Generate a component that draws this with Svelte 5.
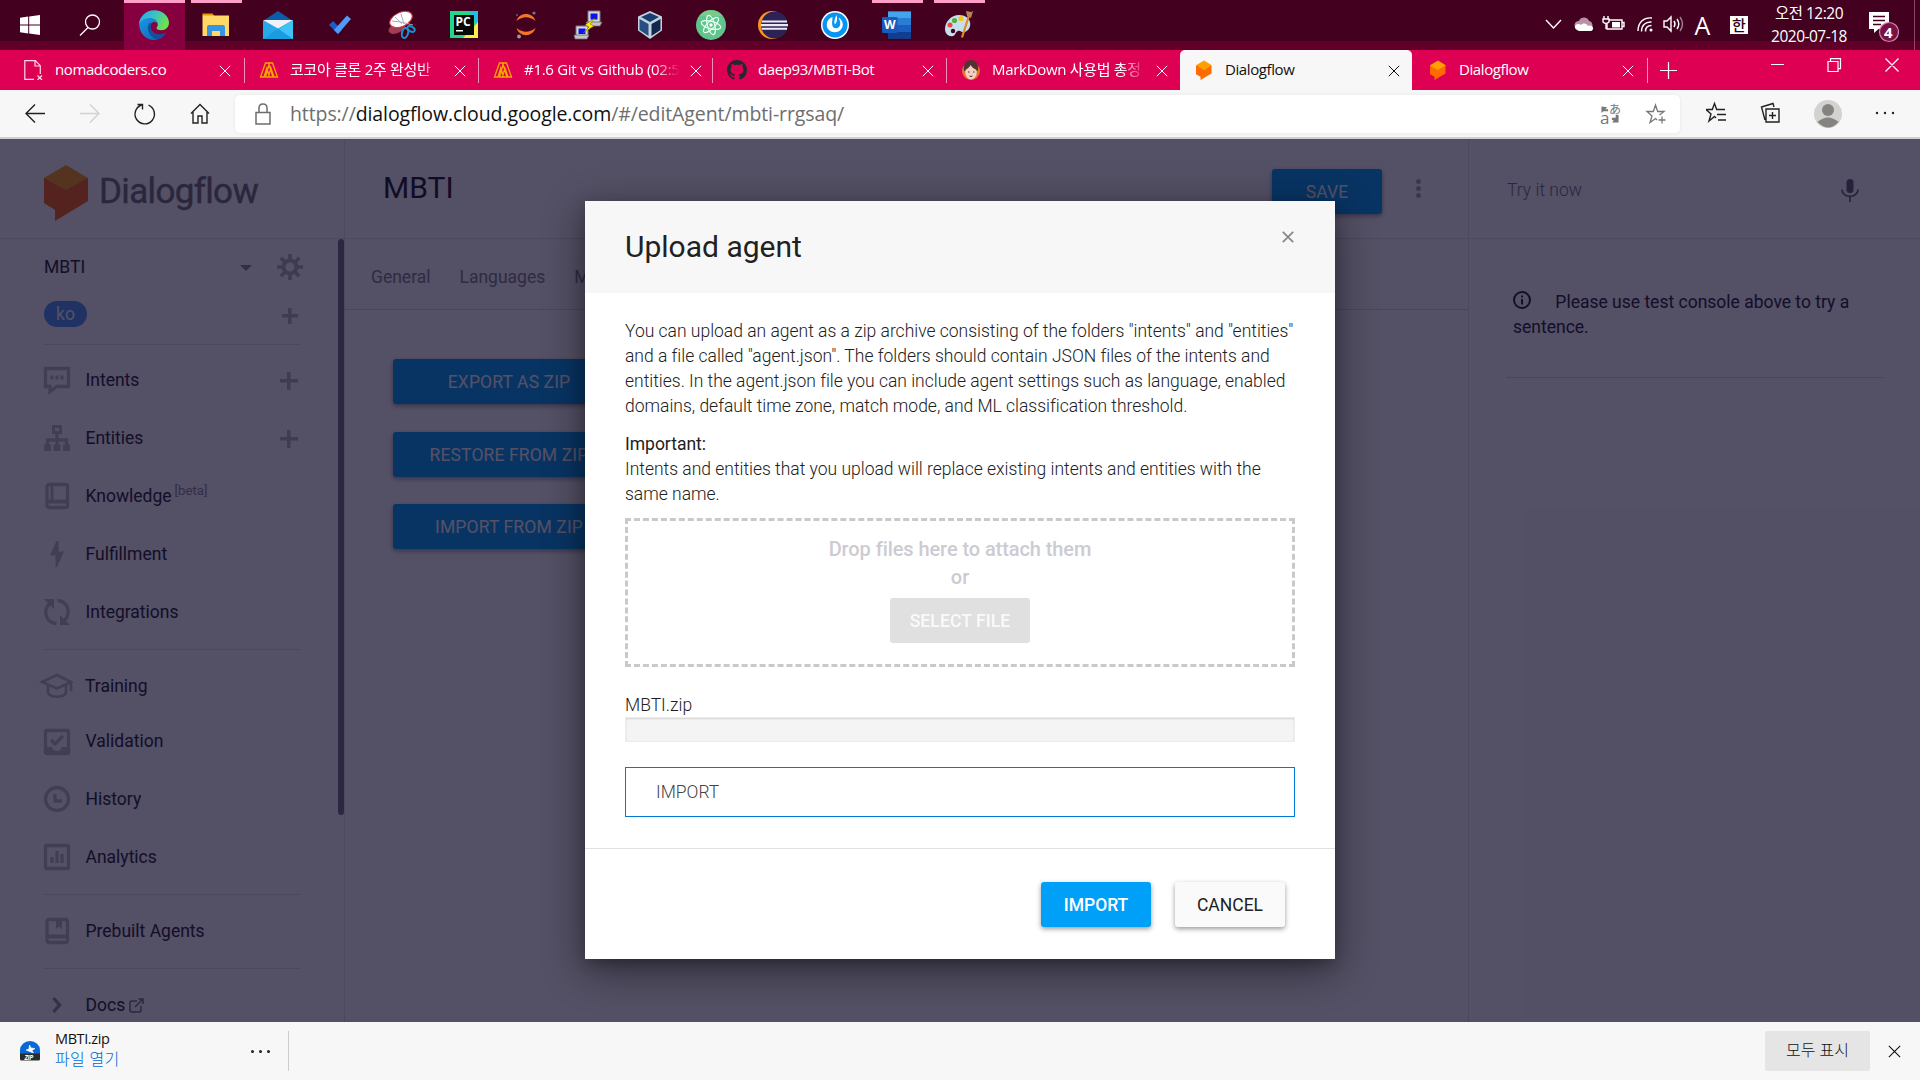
<script>
  const apps = [
    { id: 'edge', active: true, open: true },
    { id: 'files', open: true },
    { id: 'mail' },
    { id: 'todo' },
    { id: 'snip' },
    { id: 'pycharm' },
    { id: 'jupyter' },
    { id: 'putty' },
    { id: 'vbox' },
    { id: 'atom' },
    { id: 'eclipse' },
    { id: 'power' },
    { id: 'word', open: true },
    { id: 'paint', open: true }
  ];

  const tabs = [
    { icon: 'page', title: 'nomadcoders.co' },
    { icon: 'nomad', title: '코코아 클론 2주 완성반', fade: true },
    { icon: 'nomad', title: '#1.6 Git vs Github (02:5', fade: true },
    { icon: 'github', title: 'daep93/MBTI-Bot' },
    { icon: 'face', title: 'MarkDown 사용법 총정', fade: true },
    { icon: 'flow', title: 'Dialogflow', active: true },
    { icon: 'flow', title: 'Dialogflow' }
  ];

  const groups = [
    [
      { icon: 'intents', label: 'Intents', add: true },
      { icon: 'entities', label: 'Entities', add: true },
      { icon: 'knowledge', label: 'Knowledge', beta: true },
      { icon: 'bolt', label: 'Fulfillment' },
      { icon: 'sync', label: 'Integrations' }
    ],
    [
      { icon: 'training', label: 'Training' },
      { icon: 'validation', label: 'Validation' },
      { icon: 'history', label: 'History' },
      { icon: 'analytics', label: 'Analytics' }
    ],
    [{ icon: 'prebuilt', label: 'Prebuilt Agents' }],
    [{ icon: 'chevron', label: 'Docs', external: true }]
  ];
  const actions = ['EXPORT AS ZIP', 'RESTORE FROM ZIP', 'IMPORT FROM ZIP'];
</script>

{#snippet appIcon(id)}
  <svg class="app-icon" viewBox="0 0 30 30" width="30" height="30">
    {#if id === 'edge'}
      <defs>
        <linearGradient id="eg" x1="0" y1="0" x2="1" y2=".4"><stop offset="0" stop-color="#2aa5e4" /><stop offset=".5" stop-color="#35c1c8" /><stop offset="1" stop-color="#6be04f" /></linearGradient>
        <linearGradient id="eb" x1="0" y1="0" x2="1" y2="1"><stop offset="0" stop-color="#1f9be6" /><stop offset="1" stop-color="#0b5cb0" /></linearGradient>
      </defs>
      <path d="M.2 14C.2 7 6 3 12 6c5 2 7.500 6 7 8-1-2-5-3-7 0-2 4 1 10 7 10.500 3.500.3 6-.8 8-2C24.500 27 20 30 15 30 7 30 .2 23.500.2 14z" fill="url(#eb)" />
      <path d="M12 12c-6 4-2.500 14.500 5.500 17.500 4.500-.6 7.500-3.200 9.500-7-3 2-6.500 2.500-9.500 1.500-5-1.800-7-7-5.500-12z" fill="#124f9c" />
      <path d="M.2 14C.8 6 7 .2 15.200.2 24 .2 30 6.500 30 12.800c0 4.500-3.400 7.500-7.500 7.500-3 0-5-1-5-2.300 0-.8 1.300-1.200 1.300-3.700C18.800 10.500 15 8 10.800 8 5.500 8 1.800 10.800.2 14z" fill="url(#eg)" />
    {:else if id === 'files'}
      <path d="M1.500 3.500h10l2 2.500h-12z" fill="#e09b00" /><path d="M1.500 5.500h26.500v20.500h-26.500z" fill="#ffd868" />
      <path d="M6 26v-9q0-2 2-2h14q2 0 2 2v9h-5v-5h-8v5z" fill="#3595e2" />
    {:else if id === 'mail'}
      <path d="M0 11 15 1l15 10v5H0z" fill="#0a5da8" /><path d="M1 10h28v12H1z" fill="#f0f2f5" /><path d="M0 10v19h30V10L15 18.500z" fill="#28a8ea" /><path d="M0 29h30V10z" fill="#3fc3f5" /><path d="M0 29h30L15 18.500z" fill="#1b9ce0" />
    {:else if id === 'todo'}
      <path d="m4 15 4-4 9 9-4 4z" fill="#1a5fc8" /><path d="m9 20 13-14.500 4 3.500L13 24z" fill="#4e9bfb" />
    {:else if id === 'snip'}
      <ellipse cx="10" cy="18" rx="9" ry="5" fill="#b54c60" opacity=".8" transform="rotate(-25 10 18)" />
      <ellipse cx="14" cy="9.500" rx="12" ry="7" fill="#fff" stroke="#c93447" transform="rotate(-25 14 9.500)" />
      <path d="m5 11 9 1 12 3M14 4l3 10M8 7l7 7" stroke="#aab" fill="none" />
      <g fill="none" stroke="#1593d2" stroke-width="2"><ellipse cx="18" cy="23" rx="3" ry="5" transform="rotate(15 18 23)" /><ellipse cx="24" cy="19" rx="4" ry="2.300" transform="rotate(28 24 19)" /></g>
    {:else if id === 'pycharm'}
      <path d="M1 1h28v27H1z" fill="#21d789" /><path d="M20 1h9v15z" fill="#23bce9" /><path d="m29 12v16H14z" fill="#f6ee4b" /><path d="M5 5h20v20H5z" fill="#080808" />
      <text x="6.500" y="15.500" font-size="12" font-weight="700" fill="#fff" font-family="Open Sans">PC</text><path d="M7 20h7v1.500H7z" fill="#fff" />
    {:else if id === 'jupyter'}
      <path d="M5.500 11C8 1.500 22 1.500 24.500 11 18 6 12 6 5.500 11zM5.500 18c2.500 9.500 16.500 9.500 19 0-6.500 5-12.500 5-19 0z" fill="#f37626" /><circle cx="23" cy="3" r="1.600" fill="#777" /><circle cx="8" cy="26.500" r="1.900" fill="#9b9b9b" /><circle cx="6" cy="5" r="1" fill="#666" />
    {:else if id === 'putty'}
      <path d="M15 1h12v12H15zM3 16h12v11H3z" fill="#d8d8d8" stroke="#777" /><path d="M17.500 3.500h7v6h-7zM5.500 18.500h7v5.500h-7z" fill="#0a12f5" /><path d="M13 12h16l-2 4H15zM1 25h15l-2 4H2z" fill="#c5c5c5" stroke="#666" stroke-width=".8" /><path d="m22 8-10 7 4 2-6 6 11-7-4-2z" fill="#ffef00" stroke="#665c00" stroke-width=".5" />
    {:else if id === 'vbox'}
      <path d="M15 1 3 6.500v14L15 29l12-8.500v-14z" fill="#c6d1df" /><path d="m15 3 9 4-9 5-9-5z" fill="#183f72" /><path d="m4.500 9 9 5v12l-9-6z" fill="#274f80" /><path d="m25.500 9-9 5v12l9-6z" fill="#10284d" />
    {:else if id === 'atom'}
      <circle cx="15" cy="15" r="15" fill="#5fc48d" /><path d="M15 0a15 15 0 0 1 12 6H3a15 15 0 0 1 12-6z" fill="#8bd08c" opacity=".6" />
      <g fill="none" stroke="#e5fff0" stroke-width="1.200"><ellipse cx="15" cy="15" rx="10" ry="3.700" transform="rotate(15 15 15)" /><ellipse cx="15" cy="15" rx="10" ry="3.700" transform="rotate(75 15 15)" /><ellipse cx="15" cy="15" rx="10" ry="3.700" transform="rotate(135 15 15)" /></g><circle cx="15" cy="15" r="1.700" fill="#fff" />
    {:else if id === 'eclipse'}
      <circle cx="14" cy="15" r="14" fill="#f7941e" /><circle cx="16.500" cy="15" r="13.500" fill="#2c2255" /><path d="M4 10.500h25v2H4zM3 14h27v2.200H3zM4 17.800h25v2H4z" fill="#ece9f5" />
    {:else if id === 'power'}
      <circle cx="15" cy="15" r="14" fill="#fff" /><circle cx="15" cy="15" r="12.500" fill="#0795f3" /><path d="M12.500 7c-6 2-7.500 9-3.500 13 3 3 8.500 3 11.500 0 4-4 2.500-10-2-12.500 2 4 2.500 7.500.5 9.500s-5.500 1.500-6.500-1c-1-2.500 0-6 0-9z" fill="#fff" /><path d="M16.500 5c1 3 .8 7-1.500 9.500-1.500-3 0-6 1.500-9.500z" fill="#fff" />
    {:else if id === 'word'}
      <path d="M6 1.500h23v27H6z" fill="#1b5ebe" /><path d="M6 1.500h23v6.500H6z" fill="#41a5ee" /><path d="M6 8h23v7H6z" fill="#2b7cd3" /><path d="M6 22h23v6.500H6z" fill="#103f91" /><rect y="7" width="15.500" height="16" rx="1" fill="#185abd" /><text x="2" y="19.300" font-size="12" font-weight="700" fill="#fff" font-family="Open Sans">W</text>
    {:else}
      <path d="M15 5C7 5 1 12 1 19c0 5 4 8 8 7 3-.8 2-4 5-5 3-.8 3 2 7 1 4-1.500 6-6 5-10S21 5 15 5z" fill="#c4e0ee" /><circle cx="6" cy="15" r="2.500" fill="#e74d3c" /><circle cx="10.500" cy="10.500" r="2.600" fill="#52b043" /><circle cx="17" cy="8.500" r="2.600" fill="#ffc20e" /><circle cx="9" cy="21" r="2.200" fill="#43001f" /><path d="m24 5 2 1-7 22-2-1z" fill="#e88623" /><path d="m22 1 5 1 2-1-2 7-4-2z" fill="#b98554" />
    {/if}
  </svg>
{/snippet}

{#snippet favicon(id)}
  <svg class="favicon" viewBox="0 0 20 20" width="20" height="20">
    {#if id === 'page'}
      <path d="M10 19.300H.8V.7h10.500l5 5V14M11 1v5h5" fill="none" stroke="#ffd9e8" stroke-width="1.200" /><path d="m13.500 15.500 4.500 4.500m0-4.500L13.500 20" stroke="#ffd9e8" stroke-width="1.200" />
    {:else if id === 'nomad'}
      <path d="M1.500 17 6.500 3h3l4.500 14h-3.500L7.800 8 5 17zM6.500 17l4-14h3l5 14H15L11.900 8l-2.500 9z" fill="none" stroke="#f7a400" stroke-width="1.300" />
    {:else if id === 'github'}
      <path transform="scale(1.25)" fill="#24292e" d="M8 0C3.580 0 0 3.580 0 8c0 3.540 2.290 6.530 5.470 7.590.4.070.55-.17.55-.38 0-.19-.01-.82-.01-1.490-2.010.37-2.530-.49-2.690-.94-.09-.23-.48-.94-.82-1.130-.28-.15-.68-.52-.01-.53.63-.01 1.080.58 1.230.82.72 1.210 1.870.87 2.330.66.070-.52.280-.87.510-1.070-1.780-.2-3.640-.89-3.640-3.950 0-.87.310-1.590.82-2.150-.08-.2-.36-1.020.08-2.120 0 0 .67-.21 2.200.82.640-.18 1.320-.27 2-.27s1.360.09 2 .27c1.530-1.040 2.200-.82 2.200-.82.440 1.100.16 1.920.08 2.120.51.560.82 1.270.82 2.150 0 3.070-1.870 3.750-3.650 3.950.29.250.54.730.54 1.480 0 1.070-.01 1.930-.01 2.200 0 .21.150.46.550.38A8.010 8.010 0 0 0 16 8c0-4.420-3.580-8-8-8z" />
    {:else if id === 'face'}
      <circle cx="10" cy="11" r="9" fill="#e2752c" /><path d="M3 11C2 3 6 0 10.500 0S18 4 17 11z" fill="#513432" /><ellipse cx="10" cy="12" rx="5.800" ry="7.500" fill="#f5cfc2" /><path d="M4 10c2-1 4-2 5.500-5 2 3 4 4 6.500 5V5L10 1 4 5z" fill="#513432" /><path d="M7 12h1.500m3.500 0h1.500M8.500 16q1.500 1 3 0" stroke="#51312d" fill="none" />
    {:else}
      <path d="M2 5.300v9l4.500 2.500V20l11-6.500V5.300z" fill="#ff6b00" /><path d="m10 .5 7.800 4.800L10 10 2 5.300z" fill="#ffa000" />
    {/if}
  </svg>
{/snippet}

{#snippet navIcon(id)}
  <svg class="nav-icon" viewBox="0 0 26 26" width="26" height="26" fill="none" stroke="currentColor" stroke-width="3.300">
    {#if id === 'intents'}
      <path d="M1.500 1.500h23v18H13l-7 5v-5H1.500z" /><path d="M6.500 8.500h3v4h-3zM11.500 8.500h3v4h-3zM16.500 8.500h3v4h-3z" fill="currentColor" stroke="none" />
    {:else if id === 'entities'}
      <path d="M9.500 1.500h7v6h-7z" stroke-width="3" /><path d="M13 9v12M3.500 20v-5h19v5" /><path d="M0 19.500h7v6.500H0zM9.500 19.500h7v6.500h-7zM19 19.500h7v6.500h-7z" fill="currentColor" stroke="none" />
    {:else if id === 'knowledge' || id === 'prebuilt'}
      <rect x="3" y="1.500" width="20.500" height="23" rx="2" /><path d="M3 18.500h20" stroke-width="4" />
      {#if id === 'knowledge'}<path d="M8 1v17" stroke-width="3" />{:else}<path d="M12 2v9l3-2.500 3 2.500V2z" fill="currentColor" stroke="none" />{/if}
    {:else if id === 'bolt'}
      <path d="M12.500 0 6 14.500h5.500V26h1.500l7-15.500h-5.500V0z" fill="currentColor" stroke="none" />
    {:else if id === 'sync'}
      <path d="M12.500 24.500C5 24 .8 18 2 11c.5-3 2-5 4.500-7M13.500 1.500c7 .5 11.500 6 10.500 13-.5 3-2 5.500-4 7" /><path d="M0 0h10v10zM26 26H16V16z" fill="currentColor" stroke="none" />
    {:else if id === 'training'}
      <g transform="translate(-4 1)" stroke-width="2.600"><path d="m2 8 15-7 14 7-14 6.500zM31 8v9M8 11v8c3 5 15 5 18 0v-8" /></g>
    {:else if id === 'validation'}
      <rect x="1.500" y="1.500" width="23" height="23" rx="1" /><path d="m7 11 4 4 8-8" /><path d="M1 18h7q1 4 5 4t5-4h7v7H1z" fill="currentColor" stroke="none" />
    {:else if id === 'history'}
      <circle cx="13" cy="13" r="11.500" /><path d="M11 8v7h7" />
    {:else if id === 'analytics'}
      <rect x="1.500" y="1.500" width="23" height="23" rx="1" /><path d="M8 13v6M13 7v12M18 10v9" />
    {:else}
      <path d="m9.500 6 6 7-6 7" />
    {/if}
  </svg>
{/snippet}

{#snippet cross(size)}
  <svg class="cross" viewBox="0 0 12 12" width={size} height={size}><path d="m.8.8 10.400 10.400m0-10.400L.8 11.200" stroke="currentColor" /></svg>
{/snippet}

{#snippet cube(w, h)}
  <svg viewBox="0 0 44 56" width={w} height={h}><path d="M0 13v25l11 7v11l33-20V13z" fill="#ff6a14" /><path d="m22 0 22 13-22 12L0 13z" fill="#ffa21a" /></svg>
{/snippet}

<div class="screen">
  <header class="taskbar">
    <div class="task start"><svg viewBox="0 0 20 20" width="20" height="20" fill="#fff"><path d="M0 2.800 8.200 1.600v7.900H0zM9.200 1.500 20 0v9.500H9.200zM0 10.500h8.200v7.900L0 17.200zM9.200 10.500H20V20L9.200 18.500z" /></svg></div>
    <div class="task find"><svg viewBox="0 0 22 22" width="22" height="22" fill="none" stroke="#fff" stroke-width="1.300"><circle cx="13.500" cy="8" r="7" /><path d="m9 13.500-8 8" /></svg></div>
    {#each apps as a}
      <div class="task" class:active={a.active} class:open={a.open}>{@render appIcon(a.id)}</div>
    {/each}
    <div class="tray">
      <svg viewBox="0 0 146 26" width="146" height="26" fill="none" stroke="#fff" stroke-width="1.400">
        <path d="m1 9 7.500 8L16 9" />
        <path d="M32 18c-4-2-3-8 2-8 2-5 9-4 10 0 4 0 5 8 1 8z" fill="#b893a5" stroke="none" /><path d="M32 19c-5-3 0-8 4-5 3-3 6-1 7 1 5-2 7 4 3 5H34z" fill="#fff" stroke="none" />
        <path d="M64 9h13v9H62v-5M77 11.500h2v4h-2" /><path d="M67 11h8v5.500h-8z" fill="#fff" stroke="none" /><path d="M59 5v3m4-3v3m-5 0h6v3q-3 3-6 0zm3 5v5" />
        <path d="M93 20C93 11 99 6 107 7M96.500 20.500c0-6 4-10 10-9.500M100.500 20.500c0-4 2-6 6-6" /><circle cx="106" cy="19" r="1.500" fill="#fff" stroke="none" />
        <path d="M119 10h3l4-4v14l-4-4h-3zM129 10q2 3 0 6M132 8q3.500 5 0 10" /><path d="M135 6q5 7 0 14" opacity=".5" />
      </svg>
      <span class="ime">A</span><span class="han">한</span>
      <div class="clock"><span>오전 12:20</span><span>2020-07-18</span></div>
      <div class="notice"><svg viewBox="0 0 30 32" width="30" height="32"><path d="M0 1h20v17H9.500L5 22v-4H0z" fill="#fff" /><path d="M4 5.500h12M4 9.500h12M4 13.500h8" stroke="#43001f" stroke-width="1.400" /><circle cx="20" cy="21" r="9.500" fill="#7d0e45" stroke="#c58ba7" stroke-width="1.200" /></svg><b>4</b></div>
      <i class="peek"></i>
    </div>
  </header>

  <nav class="tabs">
    {#each tabs as t, i}
      <div class="tab" class:active={t.active} class:plain={i === 4 || t.active}>
        {@render favicon(t.icon)}
        <span class="tab-title" class:fade={t.fade}>{t.title}</span>
        {@render cross(12)}
      </div>
    {/each}
    <svg class="plus-tab" viewBox="0 0 17 17" width="17" height="17"><path d="M8.500 0v17M0 8.500h17" stroke="#fff" stroke-width="1.200" /></svg>
    <svg class="window" viewBox="0 0 128 14" width="128" height="14" fill="none" stroke="#fff" stroke-width="1.200"><path d="M0 6.500h13M57 3.500h10v10H57zM59.500 3V.700h10v10H67M114.500.500l13 13m0-13-13 13" /></svg>
  </nav>

  <div class="toolbar">
    <svg class="controls" viewBox="0 0 190 26" width="190" height="26" fill="none" stroke="#222" stroke-width="1.400">
      <path d="M20 12.500H1M10 3.500l-9 9 9 9" /><path d="M55 12.500h19M65 3.500l9 9-9 9" stroke="#d2d2d2" />
      <path d="M123.500 4.200a9.700 9.700 0 1 1-7-.2M112.500 3.500h5v5" /><path d="m166 12.500 9-9 9 9M168 11v11h5v-7h4v7h5V11" />
    </svg>
    <div class="address">
      <svg viewBox="0 0 16 22" width="16" height="22" fill="none" stroke="#6e6e6e" stroke-width="1.500"><path d="M1 9.500h14V21H1zM4 9V5q0-4 4-4t4 4v4" /></svg>
      <span class="url">https://<b>dialogflow.cloud.google.com</b>/#/editAgent/mbti-rrgsaq/</span>
      <span class="translate"><svg viewBox="0 0 20 20" width="20" height="20" fill="#777"><path d="M1 2v7l2-2h5V5H5l2-2zM19 11v8h-7l2-2-2-1v-2h4v-3z" /></svg><span class="ta">a</span><span class="tj">あ</span></span>
      <svg class="fav-star" viewBox="0 0 21 21" width="21" height="21" fill="none" stroke="#777" stroke-width="1.300"><path d="M12 17 10.500 15.500 5 19.500l2-6.500-5-4.500h6.300L10.500 2l2.200 6.500H19L14.500 12M17 13.500v7m-3.500-3.500h7" /></svg>
    </div>
    <svg class="side-tools" viewBox="0 0 190 34" width="190" height="34" fill="none" stroke="#222" stroke-width="1.400">
      <path d="m10 21-1.500-1.500L3 24l2-7-5-4.500h6.300L8.500 6.500l2.200 6H19M11 17.500h9M12 23h8" />
      <path d="M59 23l-3.500-13L67 6.500 68 10M60 12h13v13H60zM66.500 15v7M63 18.500h7" />
      <circle cx="122" cy="17" r="14" fill="#d3d2cf" stroke="none" /><circle cx="122" cy="13" r="6" fill="#858382" stroke="none" /><path d="M111.500 25q10.500-9 21 0-10 11-21 0z" fill="#858382" stroke="none" />
      <g fill="#222" stroke="none"><circle cx="171" cy="16" r="1.200" /><circle cx="179" cy="16" r="1.200" /><circle cx="187" cy="16" r="1.200" /></g>
    </svg>
  </div>

  <div class="page">
    <aside class="sidebar">
      <div class="brand">{@render cube(44, 56)}<span>Dialogflow</span></div>
      <div class="side-scroll">
        <div class="agent">
          <span>MBTI</span><i class="caret"></i>
          <svg class="gear" viewBox="0 0 26 26" width="26" height="26" fill="none" stroke="currentColor"><circle cx="13" cy="13" r="6.500" stroke-width="4" /><path d="M13 0v5M13 21v5M0 13h5M21 13h5M3.800 3.800l3.600 3.600M18.600 18.600l3.600 3.600M22.200 3.800l-3.600 3.600M7.400 18.600l-3.600 3.600" stroke-width="3.600" /></svg>
        </div>
        <div class="lang"><span>ko</span><i class="add small"></i></div>
        {#each groups as g, gi}
          <hr />
          <div class="group g{gi}">
            {#each g as n}
              <div class="nav {n.icon}">
                {@render navIcon(n.icon)}<span>{n.label}</span>
                {#if n.beta}<sup>[beta]</sup>{/if}
                {#if n.external}<svg class="ext" viewBox="0 0 15 15" width="15" height="15" fill="none" stroke="currentColor" stroke-width="1.500"><path d="M8 3H3Q1 3 1 5v7q0 2 2 2h7q2 0 2-2V8M6 9l7-7M9.500 1H14v5" /></svg>{/if}
                {#if n.add}<i class="add"></i>{/if}
              </div>
            {/each}
          </div>
        {/each}
        <i class="thumb"></i>
      </div>
    </aside>

    <main class="main">
      <div class="main-head"><h1>MBTI</h1><button class="btn blue w110">SAVE</button><div class="dots"><i></i><i></i><i></i></div></div>
      <div class="subtabs"><span>General</span><span>Languages</span><span>ML Settings</span></div>
      <div class="actions">{#each actions as a}<button class="btn blue wide">{a}</button>{/each}</div>
    </main>

    <section class="console">
      <div class="try"><span>Try it now</span>
        <svg viewBox="0 0 18 24" width="18" height="24" fill="none" stroke="currentColor" stroke-width="1.700"><rect x="5.500" y="1" width="7" height="14" rx="3.500" fill="currentColor" stroke="none" /><path d="M1 11.500c0 9 16 9 16 0M9 18v6" /></svg>
      </div>
      <div class="hint">
        <svg viewBox="0 0 18 18" width="18" height="18" fill="none" stroke="currentColor" stroke-width="2"><circle cx="9" cy="9" r="8" /><path d="M9 8v5.500M9 4.500v2" /></svg>
        Please use test console above to try a sentence.
      </div>
    </section>

    <div class="overlay"></div>
    <div class="modal">
      <div class="modal-head"><h2>Upload agent</h2><span class="close">{@render cross(12)}</span></div>
      <div class="modal-body">
        <p>You can upload an agent as a zip archive consisting of the folders "intents" and "entities"<br />and a file called "agent.json". The folders should contain JSON files of the intents and<br />entities. In the agent.json file you can include agent settings such as language, enabled<br />domains, default time zone, match mode, and ML classification threshold.</p>
        <p><strong>Important:</strong><br />Intents and entities that you upload will replace existing intents and entities with the<br />same name.</p>
        <div class="drop"><span>Drop files here to attach them</span><span>or</span><button class="btn select">SELECT FILE</button></div>
        <div class="filename">MBTI.zip</div>
        <div class="progress"></div>
        <div class="confirm">IMPORT</div>
      </div>
      <div class="modal-foot"><button class="btn primary w110">IMPORT</button><button class="btn cancel w110">CANCEL</button></div>
    </div>
  </div>

  <footer class="downloads">
    <svg class="zip" viewBox="0 0 20 20" width="20" height="20"><path d="M0 13V9a10 9 0 0 1 20 0v4z" fill="#0a67d8" /><path d="m9.500 4 1.500 3 4 .5-3 2 1.500 2.500L6 9l3-1z" fill="#fff" stroke="#fff" stroke-width=".6" /><path d="M0 12.500h20V18q0 1.500-1.500 1.500h-17Q0 19.500 0 18z" fill="#2b2b2b" /><text x="4.500" y="18.500" font-size="6.500" font-weight="700" font-style="italic" fill="#fff" font-family="Open Sans">ZIP</text></svg>
    <div class="dl-text"><span>MBTI.zip</span><span class="link">파일 열기</span></div>
    <div class="more"><i></i><i></i><i></i></div>
    <button class="show-all">모두 표시</button>
    {@render cross(13)}
  </footer>
</div>

<style>
  :global(body) { margin: 0; overflow: hidden; }
  * { box-sizing: border-box; }
  svg { display: block; flex: none; }
  button { border: 0; padding: 0; margin: 0; font: inherit; }
  h1, h2 { margin: 0; font-weight: 400; }
  p { margin: 0; }
  .screen { width: 1920px; height: 1080px; display: flex; flex-direction: column; overflow: hidden; font-family: "Open Sans", "Noto Sans CJK KR", sans-serif; }

  .taskbar { height: 50px; flex: none; display: flex; background: linear-gradient(#43001f 0 41px, #600029 41px); }
  .task { width: 61.900px; height: 50px; flex: none; display: flex; justify-content: center; align-items: center; border-top: 3px solid transparent; }
  .task.start { width: 60px; }
  .task.find { width: 62px; margin-right: 2px; }
  .task.start svg, .task.find svg { margin-top: -3px; }
  .task.find svg { margin-left: -2px; }
  .app-icon { margin: -3px 0 0 -1px; }
  .task.open { background: linear-gradient(#ff9fc7, #ff9fc7) center -3px / 51px 3px no-repeat; background-origin: padding-box; background-clip: border-box; }
  .task.active { width: 61px; margin-right: .9px; background: #86003f; border-color: #ff9fc7; }
  .tray { margin-left: auto; display: flex; align-items: center; height: 50px; color: #fff; }
  .tray > svg { margin-top: -2px; }
  .ime { margin: 0 0 0 3px; width: 17px; font: 25px/50px "Open Sans"; text-align: center; }
  .han { width: 18px; height: 18px; margin-left: 19px; background: #fff; color: #30001a; font: 500 15px/17px "Noto Sans CJK KR"; text-align: center; }
  .clock { width: 92px; margin-left: 15px; display: flex; flex-direction: column; text-align: center; font-size: 15.500px; line-height: 23px; letter-spacing: -.5px; margin-top: -1px; }
  .notice { margin: 4px 0 0 14px; position: relative; width: 30px; height: 32px; }
  .notice b { position: absolute; left: 15px; top: 11px; font: 700 15px/20px "Open Sans"; }
  .peek { width: 1px; height: 50px; background: #8b4765; margin: 0 5px 0 15px; }

  .tabs { height: 40px; flex: none; display: flex; align-items: center; background: #de0052; color: #fff; }
  .tab { width: 234px; height: 40px; flex: none; display: flex; align-items: center; padding: 0 13px 0 14px; position: relative; }
  .tab:first-child { width: 245px; padding-left: 24px; padding-right: 14px; }
  .tab:nth-child(6) { width: 232px; border-radius: 5px 5px 0 0; padding-left: 14px; padding-right: 12px; margin-left: -1px; }
  .tab:nth-child(7) { width: 236px; padding: 0 14px 0 16px; }
  .tab::after { content: ""; position: absolute; right: 0; top: 8px; width: 1px; height: 25px; background: #f391b6; }
  .tab.plain::after { display: none; }
  .tab.active { background: #f7f7f7; color: #111; }
  .tab-title { flex: 1; margin: -2px 14px 0 11px; height: 24px; font-size: 15px; line-height: 24px; letter-spacing: -.4px; white-space: nowrap; }
  .tab-title.fade { mask-image: linear-gradient(90deg, #000 84%, transparent); margin-right: 10px; letter-spacing: -.3px; }
  .cross { margin-top: 1px; }
  .plus-tab { margin-left: 12px; }
  .window { margin: -11px 0 0 94px; }

  .toolbar { height: 49px; flex: none; display: flex; align-items: center; padding-left: 25px; background: #f7f7f7; border-bottom: 2px solid #cfcfcf; }
  .address { width: 1445px; height: 38px; margin-left: 20px; display: flex; align-items: center; padding: 0 14px 0 20px; background: #fff; border-radius: 5px; box-shadow: 0 0 4px #0001; }
  .url { margin-left: 19px; flex: 1; font-size: 19.500px; line-height: 36px; letter-spacing: -.1px; color: #6e6e6e; }
  .url b { font-weight: 400; color: #111; }
  .translate { position: relative; width: 20px; height: 20px; margin-right: 25px; color: #777; }
  .ta { position: absolute; left: 0; top: 4px; font: 17px/20px "Open Sans"; }
  .tj { position: absolute; left: 9px; top: -4px; font: 12px/18px "Noto Sans CJK JP"; }
  .translate svg { transform: scale(.95); clip-path: polygon(0 0, 45% 0, 45% 45%, 100% 50%, 100% 100%, 55% 100%, 55% 50%, 0 50%); }
  .side-tools { margin-left: 26px; }

  .page { position: relative; height: 883px; flex: none; display: flex; font-family: Roboto, sans-serif; font-size: 17.500px; line-height: 25px; color: #262638; background: #fff; overflow: hidden; }
  .sidebar { width: 345px; flex: none; border-right: 1px solid #e4e4e4; background: #fdfdfd; }
  .brand { height: 100px; display: flex; padding: 26px 0 0 44px; border-bottom: 1px solid #e4e4e4; }
  .brand span { margin: 2px 0 0 11px; font-size: 35px; line-height: 50px; letter-spacing: -.65px; color: #737378; -webkit-text-stroke: .4px #737378; }
  .side-scroll { position: relative; padding: 16px 44px 0; }
  .agent { display: flex; align-items: center; height: 25px; }
  .caret { margin: 1px 25px 0 auto; border: 6px solid transparent; border-top: 6px solid #8c8ca0; border-bottom: 0; }
  .gear { color: #b4b4b9; margin: -1px -3px 0 0; }
  .lang { display: flex; justify-content: space-between; align-items: center; height: 26px; margin: 21px 0 17px; }
  .lang span { width: 43px; height: 26px; border-radius: 13px; background: #4e9bf7; color: #fff; text-align: center; line-height: 26px; }
  .add { width: 18px; height: 18px; margin-left: auto; margin-right: 2px; background: linear-gradient(#b9b9be, #b9b9be) center / 18px 3.500px no-repeat, linear-gradient(#b9b9be, #b9b9be) center / 3.500px 18px no-repeat; }
  .add.small { width: 16px; height: 16px; margin: 4px 2px 0 auto; }
  hr { margin: 0; border: 0; border-top: 1px solid #e4e4e4; }
  .group { display: flex; flex-direction: column; }
  .nav { height: 58px; display: flex; align-items: center; }
  .nav > span { margin-left: 15.500px; }
  .nav.training > span { margin-left: 15px; }
  .nav .nav-icon { color: #c0c0c4; overflow: visible; }
  .nav.chevron .nav-icon { color: #9393a6; }
  .nav .add { margin-top: 2px; }
  .g0 { padding: 6px 0 8px; }
  .g1 { padding: 9px 0 8px; }
  .g1 .training { height: 54px; }
  .g1 .validation { height: 57px; }
  .g2 { padding: 7px 0 8px; }
  .g3 { padding: 7px 0; }
  sup { align-self: flex-start; margin: 11px 0 0 3px; font-size: 13.200px; line-height: 25px; color: #8f8f9a; vertical-align: baseline; }
  .ext { margin-left: 4px; color: #777785; }
  .thumb { position: absolute; right: 0; top: 0; width: 6px; height: 576px; border-radius: 3px; background: #777785; }

  .main { width: 1124px; flex: none; border-right: 1px solid #e4e4e4; }
  .main-head { height: 100px; display: flex; padding: 30px 0 0 38px; border-bottom: 1px solid #e4e4e4; }
  h1 { font-size: 30px; line-height: 38px; width: 889px; color: #1b1b2b; }
  .dots { margin: 10px 0 0 34px; display: flex; flex-direction: column; gap: 2px; }
  .dots i { width: 5px; height: 5px; border-radius: 50%; background: #aaaab2; }
  .subtabs { height: 71px; padding: 26px 0 0 26px; display: flex; gap: 29px; color: #83838f; border-bottom: 1px solid #d9d9dc; }
  .actions { display: flex; flex-direction: column; align-items: flex-start; gap: 27.500px; padding: 49px 0 0 48px; }
  .btn { height: 45px; border-radius: 3px; font-family: Roboto, sans-serif; font-size: 17.500px; line-height: 46px; text-align: center; box-shadow: 0 2px 5px #0006; }
  .blue { background: #00a0f8; color: #fff; letter-spacing: .12px; }
  .w110 { width: 110px; }
  .wide { width: 232px; }

  .console { flex: 1; background: #fdfdfd; }
  .try { height: 100px; padding: 39px 61px 0 38px; display: flex; justify-content: space-between; border-bottom: 1px solid #e4e4e4; color: #777785; font-weight: 300; }
  .try svg { color: #666674; }
  .hint { margin: 0 37px 0 37px; padding: 51px 0 31px 7px; height: 139px; border-bottom: 1px solid #d9d9dc; }
  .hint svg { display: inline-block; margin-right: 20px; vertical-align: -1px; }

  .overlay { position: absolute; inset: 0; background: rgba(11, 5, 36, .7); }
  .modal { position: absolute; left: 585px; top: 62px; width: 750px; height: 758px; background: #fff; box-shadow: 0 11px 38px #0007, 0 5px 12px #0003; color: #212121; display: flex; flex-direction: column; }
  .modal-head { height: 92px; flex: none; background: #f7f7f7; display: flex; justify-content: space-between; padding: 27px 41px 0 40px; }
  h2 { font-size: 30px; line-height: 37px; }
  .close { color: #888; margin-top: 2px; }
  .close .cross, .close :global(.cross path) { stroke-width: 1.700px; }
  .modal-body { padding: 26px 40px 31px; font-weight: 300; white-space: nowrap; }
  .modal-body p { letter-spacing: -.01px; }
  .modal-body p + p { margin: 13px 0 11px; }
  strong { font-weight: 400; }
  .drop { height: 149px; border: 3px dashed #c9c9c9; padding-top: 14px; display: flex; flex-direction: column; align-items: center; color: #cccbd2; font-weight: 500; font-size: 20px; line-height: 28px; letter-spacing: -.08px; }
  .select { width: 140px; margin-top: 7px; background: #e0e0e0; color: #fafafa; box-shadow: none; font-weight: 500; letter-spacing: .1px; }
  .filename { margin-top: 26px; height: 24px; }
  .progress { height: 25px; background: #f4f4f4; border: 1px solid #ececec; box-shadow: inset 0 1px 2px #0002; }
  .confirm { height: 50px; margin-top: 25px; padding-left: 30px; border: 1px solid #0078d7; line-height: 48px; color: #444; }
  .modal-foot { flex: 1; border-top: 1px solid #e2e2e2; padding: 33px 50px 0 0; display: flex; justify-content: flex-end; gap: 24px; }
  .primary { background: #00a0f8; color: #fff; font-weight: 500; }
  .cancel { background: #fafafa; color: #212121; }

  .downloads { height: 58px; display: flex; align-items: center; padding: 0 19px 0 20px; background: #f7f7f7; color: #111; font-size: 14.500px; letter-spacing: -.4px; }
  .dl-text { margin: -5px 0 0 15px; width: 196px; display: flex; flex-direction: column; line-height: 20px; }
  .link { color: #0067d8; font-size: 16px; font-weight: 300; letter-spacing: .3px; }
  .more { width: 38px; height: 40px; display: flex; gap: 5px; align-items: center; border-right: 1px solid #ccc; }
  .more i { width: 3px; height: 3px; border-radius: 50%; background: #222; }
  .show-all { margin: 0 18px 0 auto; width: 105px; height: 40px; padding-bottom: 4px; border-radius: 2px; background: #e5e5e5; font-size: 16px; font-weight: 300; color: #111; }
</style>
